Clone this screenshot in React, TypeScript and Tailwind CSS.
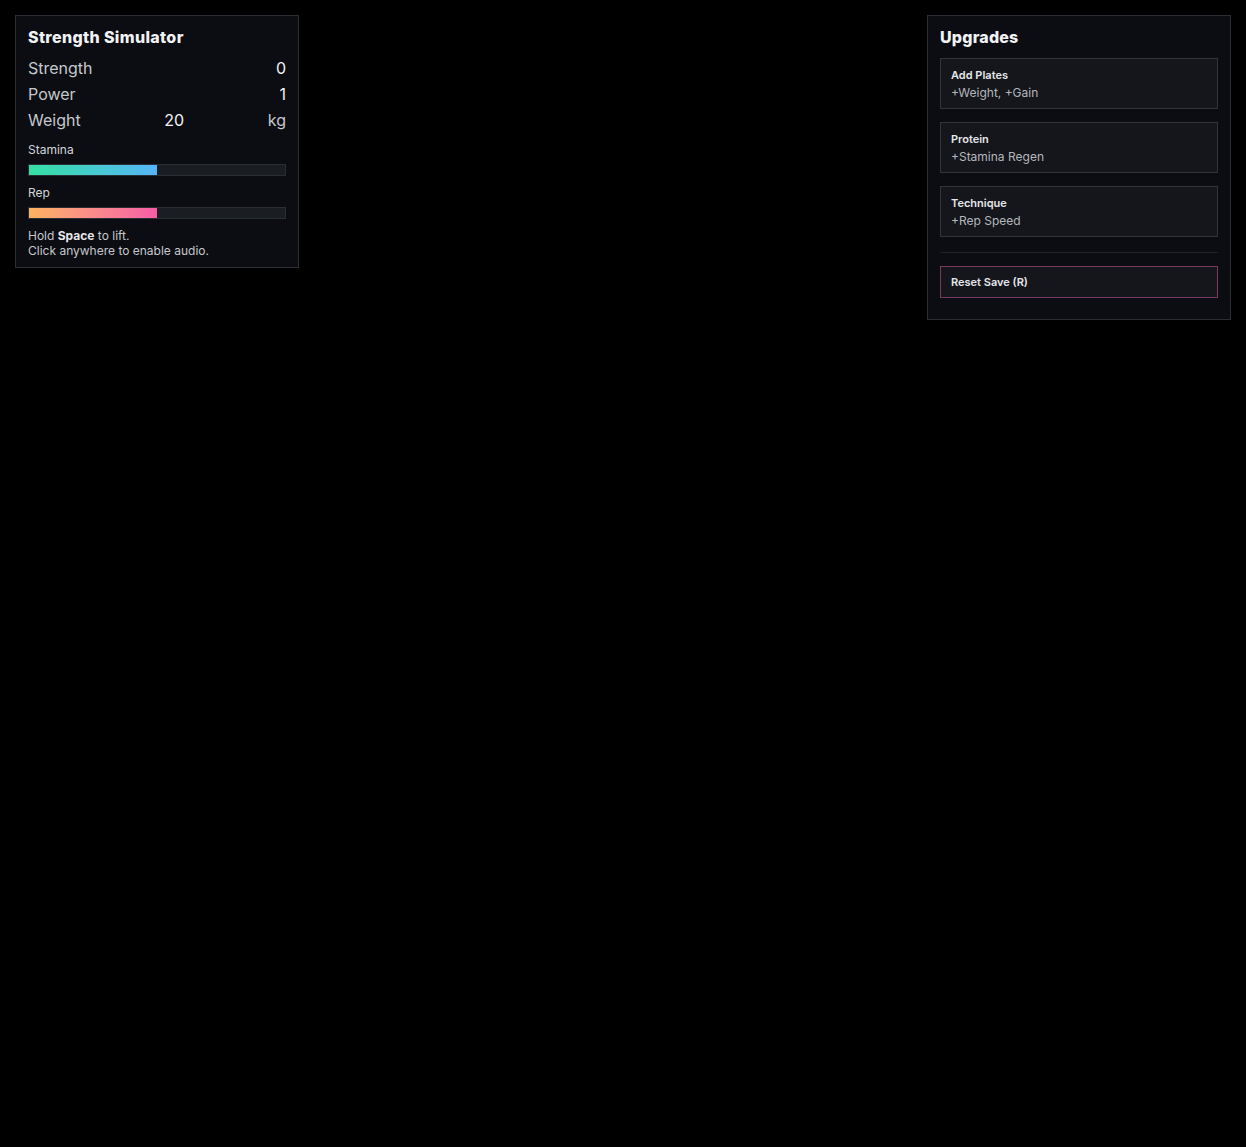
import React from "react";

const font = { fontFamily: 'Inter, "Noto Sans", "Liberation Sans", sans-serif' };

function Bar({ fill, pct }: { fill: string; pct: number }) {
  return (
    <div className="h-[12px] w-full border border-[#2a2e35] bg-[#1a1d22]">
      <div className={`h-full ${fill}`} style={{ width: `${pct}%` }} />
    </div>
  );
}

function Upgrade({ title, desc }: { title: string; desc: string }) {
  return (
    <div className="flex h-[51px] flex-col justify-center border border-[#30343b] bg-[#14161b] px-[10px]">
      <div className="text-[11px] font-semibold leading-[14px] text-[#e6e7ea]">{title}</div>
      <div className="mt-[3px] text-[12px] leading-[15px] text-[#b4b7bd]">{desc}</div>
    </div>
  );
}

export default function App() {
  return (
    <div className="flex min-h-[1147px] w-full items-start justify-between bg-black p-[15px]" style={font}>
      <div className="w-[284px] border border-[#2b2e34] bg-[#0b0d12] px-[12px] pt-[11px] pb-[9px]">
        <div className="text-[16px] font-extrabold leading-[20px] tracking-[0.35px] text-[#f1f2f4]">Strength Simulator</div>
        <div className="mt-[8px] text-[16px] text-[#c5c8cd]">
          <div className="flex h-[26px] items-center justify-between">
            <span>Strength</span>
            <span className="text-[#f1f2f4]">0</span>
          </div>
          <div className="flex h-[26px] items-center justify-between">
            <span>Power</span>
            <span className="text-[#f1f2f4]">1</span>
          </div>
          <div className="flex h-[26px] items-center justify-between">
            <span>Weight</span>
            <span className="text-[#f1f2f4]">20</span>
            <span>kg</span>
          </div>
        </div>
        <div className="mt-[9px] text-[12px] leading-[16px] text-[#d3d5d9]">Stamina</div>
        <div className="mt-[6px]">
          <Bar fill="bg-gradient-to-r from-[#34e0a1] to-[#56b4f6]" pct={50} />
        </div>
        <div className="mt-[9px] text-[12px] leading-[16px] text-[#d3d5d9]">Rep</div>
        <div className="mt-[6px]">
          <Bar fill="bg-gradient-to-r from-[#fdb35f] to-[#f65ca6]" pct={50} />
        </div>
        <div className="mt-[9px] text-[12px] leading-[15px] text-[#c5c8cd]">
          <div>
            Hold <b className="font-bold text-[#e6e7ea]">Space</b> to lift.
          </div>
          <div>Click anywhere to enable audio.</div>
        </div>
      </div>

      <div className="w-[304px] border border-[#2b2e34] bg-[#0b0d12] px-[12px] pt-[11px] pb-[21px]">
        <div className="text-[16px] font-extrabold leading-[20px] tracking-[0.2px] text-[#f1f2f4]">Upgrades</div>
        <div className="mt-[11px] flex flex-col gap-[13px]">
          <Upgrade title="Add Plates" desc="+Weight, +Gain" />
          <Upgrade title="Protein" desc="+Stamina Regen" />
          <Upgrade title="Technique" desc="+Rep Speed" />
        </div>
        <div className="mt-[15px] h-px bg-[#1f2228]" />
        <button className="mt-[13px] flex h-[32px] w-full items-center border border-[#7a3a5e] bg-[#14161b] px-[10px] text-left text-[11px] font-semibold text-[#e6e7ea]">
          Reset Save (R)
        </button>
      </div>
    </div>
  );
}
